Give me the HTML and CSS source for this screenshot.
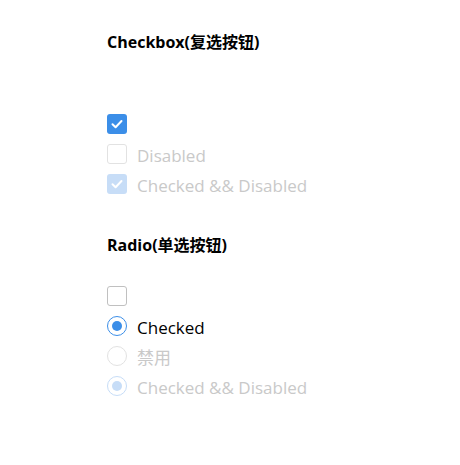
FILE: index.html
```html
<!DOCTYPE html>
<html>
<head>
<meta charset="utf-8">
<link rel="stylesheet" href="styles.css">
</head>
<body>
<div class="page">
  <section class="group">
    <h3 class="title">Checkbox(复选按钮)</h3>
    <div class="list">
      <label class="item"><span class="box checked"><svg viewBox="0 0 20 20" width="20" height="20"><path d="M5.5 10.2 L8.6 13.2 L14.5 7" fill="none" stroke="#fff" stroke-width="2" stroke-linecap="round" stroke-linejoin="round"/></svg></span></label>
      <label class="item disabled"><span class="box"></span><span class="text">Disabled</span></label>
      <label class="item disabled"><span class="box checked-disabled"><svg viewBox="0 0 20 20" width="20" height="20"><path d="M5.5 10.2 L8.6 13.2 L14.5 7" fill="none" stroke="#fff" stroke-width="2" stroke-linecap="round" stroke-linejoin="round"/></svg></span><span class="text">Checked &amp;&amp; Disabled</span></label>
    </div>
  </section>
  <section class="group">
    <h3 class="title">Radio(单选按钮)</h3>
    <div class="list list-radio">
      <label class="item"><span class="box"></span></label>
      <label class="item"><span class="radio on"><span class="dot"></span></span><span class="text">Checked</span></label>
      <label class="item disabled"><span class="radio off-disabled"></span><span class="text">禁用</span></label>
      <label class="item disabled"><span class="radio on-disabled"><span class="dot"></span></span><span class="text">Checked &amp;&amp; Disabled</span></label>
    </div>
  </section>
</div>
</body>
</html>
```
FILE: styles.css
```css
html, body {
  margin: 0;
  padding: 0;
  background: #fff;
}
body {
  font-family: "Open Sans", "Noto Sans CJK SC", sans-serif;
  color: #000;
  font-size: 16px;
}
.page {
  padding: 29px 0 0 107px;
}
.group {
  margin: 0;
}
.title {
  margin: 0;
  font-size: 16px;
  font-weight: 700;
  line-height: 26px;
}
.list {
  display: flex;
  flex-direction: column;
  gap: 10px;
  padding-top: 59px;
}
.list-radio {
  padding-top: 28px;
}
.group + .group {
  margin-top: 38px;
}
.item {
  display: flex;
  align-items: center;
  gap: 10px;
  height: 20px;
}
.text {
  font-size: 17px;
  line-height: 20px;
  padding-top: 3px;
}
.disabled .text {
  color: #c9c9c9;
}
.box {
  width: 20px;
  height: 20px;
  box-sizing: border-box;
  border: 1px solid #c0c0c0;
  border-radius: 3px;
  display: block;
  flex: none;
}
.box svg {
  display: block;
}
.disabled .box {
  border-color: #e2e2e2;
}
.box.checked {
  background: #3b8ee8;
  border: none;
}
.disabled .box.checked-disabled {
  background: #c7ddf7;
  border: none;
}
.radio {
  width: 20px;
  height: 20px;
  box-sizing: border-box;
  border-radius: 50%;
  border: 1px solid #e2e2e2;
  display: flex;
  align-items: center;
  justify-content: center;
  flex: none;
}
.radio.on {
  border-color: #3b8ee8;
}
.radio.on .dot {
  background: #3b8ee8;
}
.radio.on-disabled {
  border-color: #c7ddf7;
}
.radio.on-disabled .dot {
  background: #c7ddf7;
}
.dot {
  width: 10px;
  height: 10px;
  border-radius: 50%;
}
```
